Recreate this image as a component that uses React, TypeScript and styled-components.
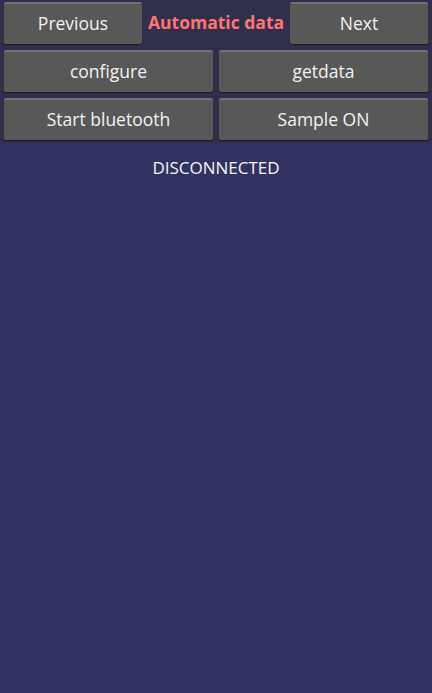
import React from "react";
import styled, { createGlobalStyle } from "styled-components";

const GlobalStyle = createGlobalStyle`
  html, body {
    margin: 0;
    padding: 0;
    background: #323262;
  }
  #root {
    min-height: 100vh;
  }
`;

const Screen = styled.div`
  display: flex;
  flex-direction: column;
  width: 432px;
  height: 693px;
  background: #323262;
  font-family: "Open Sans", "DejaVu Sans", sans-serif;
`;

/* top panel with the buttons */
const Panel = styled.div`
  display: flex;
  flex-direction: column;
  gap: 6px;
  padding: 2px 4px 3px 4px;
  background: #31304a;
`;

const Row = styled.div`
  display: flex;
  align-items: center;
  gap: 6px;
`;

const Button = styled.button<{ $width?: number }>`
  flex: ${(p) => (p.$width ? `0 0 ${p.$width}px` : "1 1 0")};
  height: 42px;
  margin: 0;
  padding: 0 0 2px 0;
  border: none;
  border-top: 2px solid #727272;
  border-radius: 2px;
  background: #585858;
  box-shadow: 0 1px 1px rgba(0, 0, 0, 0.55);
  color: #f2f2f2;
  font-family: inherit;
  font-size: 17.5px;
  cursor: pointer;
`;

const Title = styled.div`
  flex: 1;
  padding-bottom: 2px;
  text-align: center;
  color: #ff7474;
  font-size: 17.5px;
  font-weight: bold;
  white-space: nowrap;
`;

const Status = styled.div`
  margin-top: 13px;
  text-align: center;
  color: #f4f4f4;
  font-size: 17px;
`;

export default function App() {
  return (
    <Screen>
      <GlobalStyle />
      <Panel>
        <Row>
          <Button $width={138}>Previous</Button>
          <Title>Automatic data</Title>
          <Button $width={138}>Next</Button>
        </Row>
        <Row>
          <Button>configure</Button>
          <Button>getdata</Button>
        </Row>
        <Row>
          <Button>Start bluetooth</Button>
          <Button>Sample ON</Button>
        </Row>
      </Panel>
      <Status>DISCONNECTED</Status>
    </Screen>
  );
}
